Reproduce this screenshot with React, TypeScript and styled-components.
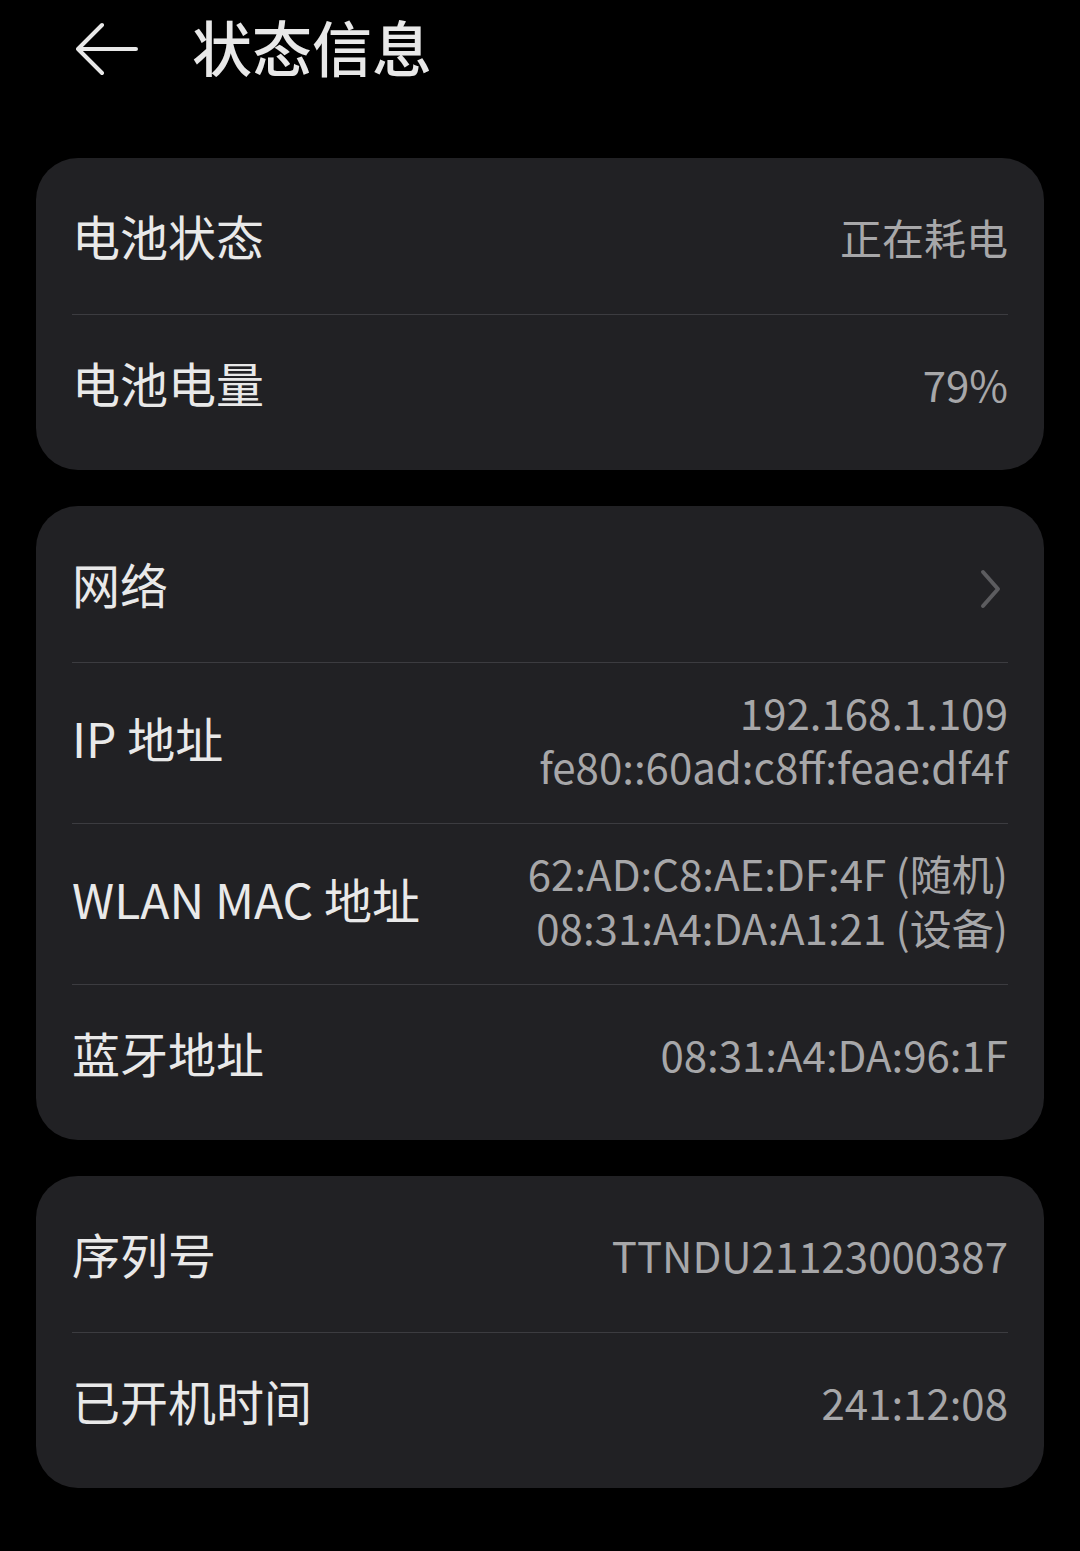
import React from "react";
import styled, { createGlobalStyle } from "styled-components";

const Global = createGlobalStyle`
  html, body { margin: 0; padding: 0; background: #000; }
  body { font-family: "Noto Sans CJK SC", "Noto Sans", sans-serif; -webkit-font-smoothing: antialiased; }
`;

const Page = styled.div`
  width: 1080px;
  min-height: 1551px;
  background: #000;
  box-sizing: border-box;
  padding: 0 36px 60px;
`;

const Header = styled.header`
  height: 100px;
  display: flex;
  align-items: center;
  gap: 52px;
  padding-left: 40px;
  margin-bottom: 58px;
`;

const BackButton = styled.button`
  background: none;
  border: none;
  padding: 0;
  width: 64px;
  height: 56px;
  display: flex;
  align-items: center;
  cursor: pointer;
  margin-bottom: 2px;
`;

const Title = styled.h1`
  margin: 0 0 9px;
  font-size: 60px;
  font-weight: 500;
  color: #e8e8e8;
  line-height: 1;
`;

const CardList = styled.div`
  display: flex;
  flex-direction: column;
  gap: 36px;
`;

const Card = styled.section`
  background: #212124;
  border-radius: 42px;
  padding: 10px 36px;
`;

const Row = styled.div`
  display: flex;
  align-items: center;
  justify-content: space-between;
  box-sizing: border-box;
  min-height: 146px;
  padding: 26px 0;
  & + & {
    border-top: 1.5px solid #3c3c40;
  }
`;

const Label = styled.span`
  font-size: 48px;
  font-weight: 400;
  color: #e9e9e9;
  white-space: nowrap;
  margin: -6px 0 6px;
`;

const Value = styled.div`
  font-size: 42px;
  line-height: 54px;
  color: #a7a7a9;
  text-align: right;
  white-space: nowrap;
  margin: -4px 0 4px;
`;

const ValueLine = styled.span`
  display: block;
`;

const Chevron = styled.svg`
  width: 26px;
  height: 42px;
  margin-right: 4px;
`;

type Item = { label: string; value?: string[]; chevron?: boolean };

const groups: Item[][] = [
  [
    { label: "电池状态", value: ["正在耗电"] },
    { label: "电池电量", value: ["79%"] },
  ],
  [
    { label: "网络", chevron: true },
    { label: "IP 地址", value: ["192.168.1.109", "fe80::60ad:c8ff:feae:df4f"] },
    {
      label: "WLAN MAC 地址",
      value: ["62:AD:C8:AE:DF:4F (随机)", "08:31:A4:DA:A1:21 (设备)"],
    },
    { label: "蓝牙地址", value: ["08:31:A4:DA:96:1F"] },
  ],
  [
    { label: "序列号", value: ["TTNDU21123000387"] },
    { label: "已开机时间", value: ["241:12:08"] },
  ],
];

export default function App() {
  return (
    <Page>
      <Global />
      <Header>
        <BackButton aria-label="返回">
          <svg width="64" height="56" viewBox="0 0 64 56" fill="none">
            <path
              d="M26 4 L2 28 L26 52 M2 28 H60"
              stroke="#e8e8e8"
              strokeWidth="4"
              strokeLinecap="round"
              strokeLinejoin="round"
            />
          </svg>
        </BackButton>
        <Title>状态信息</Title>
      </Header>
      <CardList>
        {groups.map((g, gi) => (
          <Card key={gi}>
            {g.map((it) => (
              <Row key={it.label}>
                <Label>{it.label}</Label>
                {it.chevron ? (
                  <Chevron viewBox="0 0 26 42" fill="none">
                    <path
                      d="M5 4 L20 21 L5 38"
                      stroke="#5c5c5f"
                      strokeWidth="4"
                      strokeLinecap="round"
                      strokeLinejoin="round"
                    />
                  </Chevron>
                ) : (
                  <Value>
                    {it.value!.map((v) => (
                      <ValueLine key={v}>{v}</ValueLine>
                    ))}
                  </Value>
                )}
              </Row>
            ))}
          </Card>
        ))}
      </CardList>
    </Page>
  );
}
